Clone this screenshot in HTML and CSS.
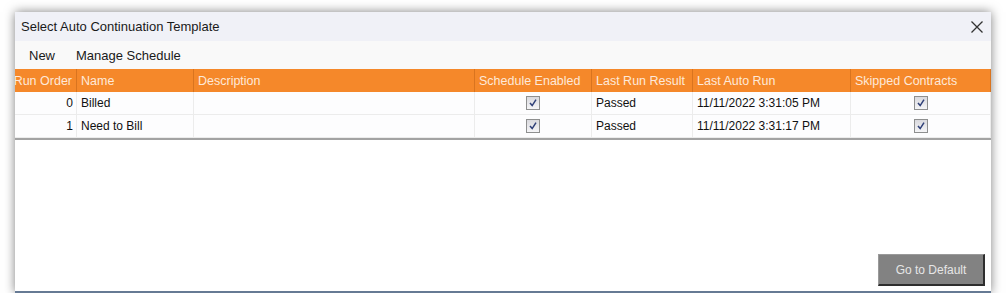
FILE: index.html
```html
<!DOCTYPE html>
<html lang="en">
<head>
    <meta charset="utf-8" />
    <title>Select Auto Continuation Template</title>
    <link rel="stylesheet" href="styles.css">
</head>
<body>
    <div class="dialog">
        <div class="titlebar">
            <span class="title">Select Auto Continuation Template</span>
            <svg class="close" width="12" height="12" viewBox="0 0 12 12">
                <path d="M0.5 0.5 L11.5 11.5 M11.5 0.5 L0.5 11.5" stroke="#333" stroke-width="1.3" fill="none"/>
            </svg>
        </div>
        <div class="menubar">
            <span class="menu-item">New</span>
            <span class="menu-item">Manage Schedule</span>
        </div>

        <div class="grid">
            <div class="row head">
                <div class="cell num"><span>Run Order</span></div>
                <div class="cell">Name</div>
                <div class="cell">Description</div>
                <div class="cell">Schedule Enabled</div>
                <div class="cell">Last Run Result</div>
                <div class="cell">Last Auto Run</div>
                <div class="cell">Skipped Contracts</div>
            </div>
            <div class="row">
                <div class="cell num">0</div>
                <div class="cell">Billed</div>
                <div class="cell"></div>
                <div class="cell check"><span class="box"><svg width="12" height="12" viewBox="0 0 12 12"><path d="M3 6 L5.2 8.6 L9 2.6" stroke="#2e3f78" stroke-width="1.5" fill="none"/></svg></span></div>
                <div class="cell">Passed</div>
                <div class="cell">11/11/2022 3:31:05 PM</div>
                <div class="cell check"><span class="box"><svg width="12" height="12" viewBox="0 0 12 12"><path d="M3 6 L5.2 8.6 L9 2.6" stroke="#2e3f78" stroke-width="1.5" fill="none"/></svg></span></div>
            </div>
            <div class="row">
                <div class="cell num">1</div>
                <div class="cell">Need to Bill</div>
                <div class="cell"></div>
                <div class="cell check"><span class="box"><svg width="12" height="12" viewBox="0 0 12 12"><path d="M3 6 L5.2 8.6 L9 2.6" stroke="#2e3f78" stroke-width="1.5" fill="none"/></svg></span></div>
                <div class="cell">Passed</div>
                <div class="cell">11/11/2022 3:31:17 PM</div>
                <div class="cell check"><span class="box"><svg width="12" height="12" viewBox="0 0 12 12"><path d="M3 6 L5.2 8.6 L9 2.6" stroke="#2e3f78" stroke-width="1.5" fill="none"/></svg></span></div>
            </div>
        </div>

        <div class="footer">
            <button class="default-btn">Go to Default</button>
        </div>
    </div>
</body>
</html>
```

FILE: styles.css
```css
body {
    margin: 0;
    padding: 12px 16px 0 15px;
    background-color: #ffffff;
    font-family: 'Liberation Sans', Arial, sans-serif;
    color: #111;
}

.dialog {
    width: 976px;
    height: 281px;
    box-sizing: border-box;
    display: flex;
    flex-direction: column;
    background-color: #ffffff;
    border-bottom: 2px solid #667a94;
    box-shadow: 0 0 10px rgba(0, 0, 0, 0.5);
}

.titlebar {
    height: 29px;
    background-color: #f0f1f7;
    display: flex;
    align-items: center;
    justify-content: space-between;
    padding: 0 8px 0 6px;
}

.title {
    font-size: 13px;
    color: #1a1a1a;
}

.close {
    margin-top: 1px;
}

.menubar {
    height: 28px;
    background-color: #f9f9f9;
    display: flex;
    align-items: center;
    padding-left: 14px;
    gap: 21px;
    font-size: 13px;
    color: #1a1a1a;
}

.grid {
    border-bottom: 2px solid #a3a3a3;
}

.row {
    display: grid;
    grid-template-columns: 62px 117px 281px 117px 101px 158px 140px;
    height: 23px;
    font-size: 12px;
    background-color: #fdfdfe;
}

.row .cell {
    border-right: 1px solid #ececec;
    border-bottom: 1px solid #ececec;
    display: flex;
    align-items: center;
    padding-left: 4px;
    overflow: hidden;
    white-space: nowrap;
}

.row .cell.num {
    justify-content: flex-end;
    padding-left: 0;
    padding-right: 3px;
}

.row .cell.check {
    justify-content: center;
    padding-left: 0;
}

.head {
    background-color: #f5882a;
    color: #fee9d9;
    font-size: 12.5px;
}

.head .cell {
    border-right: 1px solid #d9741f;
    border-bottom: none;
}

.head .cell.num {
    padding-right: 4px;
}

.box {
    width: 12px;
    height: 12px;
    border: 1px solid #8e8f8f;
    background: linear-gradient(#d9d9de, #f5f5f7);
    display: flex;
}

.footer {
    flex: 1;
    display: flex;
    align-items: flex-end;
    justify-content: flex-end;
    padding: 0 6px 5px 0;
}

.default-btn {
    width: 107px;
    height: 32px;
    background-color: #828282;
    border: none;
    border-right: 2px solid #2e2e2e;
    border-bottom: 2px solid #2e2e2e;
    border-top: 1px solid #9a9a9a;
    border-left: 1px solid #9a9a9a;
    color: #e6e6e6;
    font-family: 'Liberation Sans', Arial, sans-serif;
    font-size: 12px;
    padding: 0;
}
```
